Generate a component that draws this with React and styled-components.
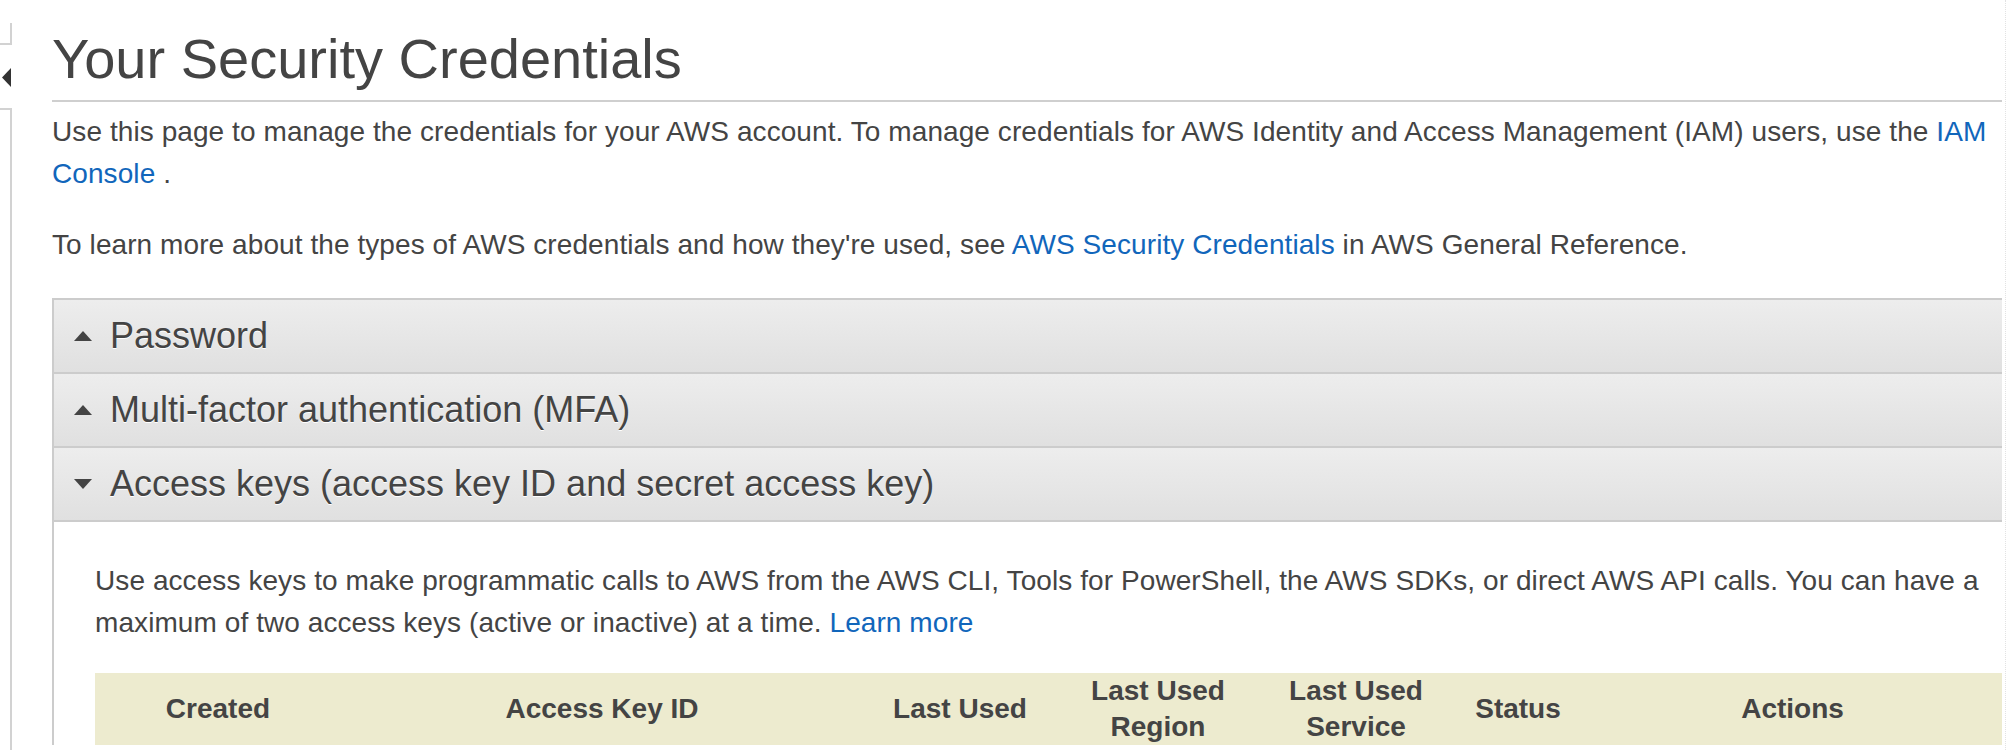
import React from 'react';
import styled, { createGlobalStyle } from 'styled-components';

const GlobalStyle = createGlobalStyle`
  html, body {
    margin: 0;
    padding: 0;
    background: #fff;
  }
  body {
    font-family: "Liberation Sans", Arial, Helvetica, sans-serif;
    color: #444;
  }
  * {
    box-sizing: border-box;
  }
`;

const columns = [
  { key: 'created', label: ['Created'], width: 246 },
  { key: 'id', label: ['Access Key ID'], width: 522 },
  { key: 'used', label: ['Last Used'], width: 194 },
  { key: 'region', label: ['Last Used', 'Region'], width: 202 },
  { key: 'service', label: ['Last Used', 'Service'], width: 194 },
  { key: 'status', label: ['Status'], width: 130 },
  { key: 'actions', label: ['Actions'] },
];

const sections = [
  { title: 'Password', open: false },
  { title: 'Multi-factor authentication (MFA)', open: false },
  { title: 'Access keys (access key ID and secret access key)', open: true },
];

const Caret = ({ open }) => (
  <CaretIcon viewBox="0 0 18 10" aria-hidden="true">
    {open ? <polygon points="0,0 18,0 9,10" /> : <polygon points="0,10 18,10 9,0" />}
  </CaretIcon>
);

const App = () => {
  return (
    <Page>
      <GlobalStyle />
      <Sidebar>
        <SideTab />
        <Toggle aria-label="Collapse navigation">
          <svg viewBox="0 0 9 19" width="9" height="19">
            <polygon points="9,0 9,19 0,9.5" fill="#333" />
          </svg>
        </Toggle>
        <SidePanel />
      </Sidebar>

      <Main>
        <Title>Your Security Credentials</Title>

        <Intro>
          <Text>
            Use this page to manage the credentials for your AWS account. To manage credentials for AWS
            Identity and Access Management (IAM) users, use the <Link href="#">IAM Console</Link> .
          </Text>
          <Text>
            To learn more about the types of AWS credentials and how they're used, see{' '}
            <Link href="#">AWS Security Credentials</Link> in AWS General Reference.
          </Text>
        </Intro>

        <Accordion>
          {sections.map((s) => (
            <Section key={s.title}>
              <SectionHeader>
                <Caret open={s.open} />
                <span>{s.title}</span>
              </SectionHeader>
              {s.open && (
                <SectionBody>
                  <Text>
                    Use access keys to make programmatic calls to AWS from the AWS CLI, Tools for
                    PowerShell, the AWS SDKs, or direct AWS API calls. You can have a maximum of two
                    access keys (active or inactive) at a time. <Link href="#">Learn more</Link>
                  </Text>
                  <KeyTable>
                    <colgroup>
                      {columns.map((c) => (
                        <col key={c.key} style={c.width ? { width: c.width } : undefined} />
                      ))}
                    </colgroup>
                    <thead>
                      <tr>
                        {columns.map((c) => (
                          <HeadCell key={c.key}>
                            {c.label.map((line, i) => (
                              <React.Fragment key={line}>
                                {i > 0 && <br />}
                                {line}
                              </React.Fragment>
                            ))}
                          </HeadCell>
                        ))}
                      </tr>
                    </thead>
                  </KeyTable>
                </SectionBody>
              )}
            </Section>
          ))}
        </Accordion>
      </Main>
    </Page>
  );
};

export default App;

const Page = styled.div`
  display: flex;
  width: 2006px;
  min-height: 750px;
  overflow: hidden;
`;

const Sidebar = styled.aside`
  flex: 0 0 12px;
  display: flex;
  flex-direction: column;
  padding-top: 23px;
`;

const SideTab = styled.div`
  height: 22px;
  border: 2px solid #d2d2d2;
  border-left: none;
  border-top: none;
`;

const Toggle = styled.button`
  display: flex;
  justify-content: flex-end;
  width: 11px;
  height: 19px;
  margin: 23px 0 21px;
  padding: 0;
  border: none;
  background: none;
`;

const SidePanel = styled.div`
  flex: 1;
  border-top: 2px solid #d2d2d2;
  border-right: 2px solid #d2d2d2;
`;

const Main = styled.main`
  flex: 1;
  padding: 27px 3px 0 40px;
  border-right: 1px dotted #e2e2e2;
`;

const Title = styled.h1`
  margin: 0;
  padding-bottom: 9px;
  border-bottom: 2px solid #cfcfcf;
  font-size: 56px;
  line-height: 64px;
  font-weight: normal;
  color: #444;
`;

const Intro = styled.div`
  display: flex;
  flex-direction: column;
  gap: 29px;
  padding: 9px 0 32px;
`;

const Text = styled.p`
  margin: 0;
  font-size: 28px;
  line-height: 42px;
  letter-spacing: 0.08px;
  color: #444;
`;

const Link = styled.a`
  color: #1166bb;
  text-decoration: none;
`;

const Accordion = styled.div`
  border-top: 2px solid #cccccc;
  border-left: 2px solid #cccccc;
`;

const Section = styled.section`
  display: flex;
  flex-direction: column;
`;

const SectionHeader = styled.div`
  display: flex;
  align-items: center;
  gap: 18px;
  height: 74px;
  padding-left: 20px;
  border-bottom: 2px solid #cccccc;
  background: linear-gradient(#ededed, #e0e0e0);
  font-size: 36px;
  color: #444;
  text-shadow: 0 1px 0 #fff;
`;

const CaretIcon = styled.svg`
  width: 18px;
  height: 10px;
  fill: #444;
  flex: 0 0 auto;
`;

const SectionBody = styled.div`
  padding: 38px 0 0 41px;
  background: #fff;
`;

const KeyTable = styled.table`
  width: 100%;
  margin-top: 29px;
  border-collapse: collapse;
  table-layout: fixed;
`;

const HeadCell = styled.th`
  height: 72px;
  padding: 0;
  background: #edebcf;
  font-size: 28px;
  line-height: 36px;
  font-weight: bold;
  color: #444;
  text-align: center;
  vertical-align: middle;
`;
